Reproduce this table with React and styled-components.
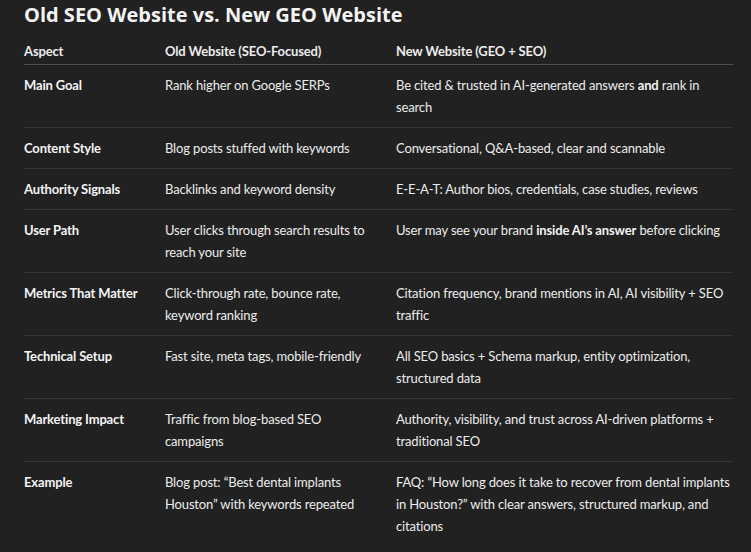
import React from "react";
import styled, { createGlobalStyle } from "styled-components";

const GlobalStyle = createGlobalStyle`
  html, body {
    margin: 0;
    padding: 0;
    background: #212121;
  }
  body {
    font-family: Lato, "Open Sans", sans-serif;
    color: #ececec;
    -webkit-font-smoothing: antialiased;
  }
`;

const rows = [
  {
    aspect: "Main Goal",
    old: "Rank higher on Google SERPs",
    next: (
      <>
        Be cited &amp; trusted in AI-generated answers <strong>and</strong> rank in search
      </>
    ),
  },
  {
    aspect: "Content Style",
    old: "Blog posts stuffed with keywords",
    next: "Conversational, Q&A-based, clear and scannable",
  },
  {
    aspect: "Authority Signals",
    old: "Backlinks and keyword density",
    next: "E-E-A-T: Author bios, credentials, case studies, reviews",
  },
  {
    aspect: "User Path",
    old: "User clicks through search results to reach your site",
    next: (
      <>
        User may see your brand <strong>inside AI’s answer</strong> before clicking
      </>
    ),
  },
  {
    aspect: "Metrics That Matter",
    old: "Click-through rate, bounce rate, keyword ranking",
    next: "Citation frequency, brand mentions in AI, AI visibility + SEO traffic",
  },
  {
    aspect: "Technical Setup",
    old: "Fast site, meta tags, mobile-friendly",
    next: "All SEO basics + Schema markup, entity optimization, structured data",
  },
  {
    aspect: "Marketing Impact",
    old: "Traffic from blog-based SEO campaigns",
    next: "Authority, visibility, and trust across AI-driven platforms + traditional SEO",
  },
  {
    aspect: "Example",
    old: "Blog post: “Best dental implants Houston” with keywords repeated",
    next: "FAQ: “How long does it take to recover from dental implants in Houston?” with clear answers, structured markup, and citations",
  },
];

function App() {
  return (
    <Page>
      <GlobalStyle />
      <Title>Old SEO Website vs. New GEO Website</Title>
      <Table>
        <colgroup>
          <col style={{ width: 141 }} />
          <col style={{ width: 231 }} />
          <col />
        </colgroup>
        <thead>
          <tr>
            <Th>Aspect</Th>
            <Th>Old Website (SEO-Focused)</Th>
            <Th>New Website (GEO + SEO)</Th>
          </tr>
        </thead>
        <tbody>
          {rows.map((r, i) => (
            <Row key={r.aspect} $last={i === rows.length - 1}>
              <Td>
                <strong>{r.aspect}</strong>
              </Td>
              <Td>{r.old}</Td>
              <Td>{r.next}</Td>
            </Row>
          ))}
        </tbody>
      </Table>
    </Page>
  );
}

export default App;

const Page = styled.div`
  width: 751px;
  height: 552px;
  padding: 0 18px 0 24px;
  box-sizing: border-box;
  overflow: hidden;
`;

const Title = styled.h2`
  margin: 0;
  padding-top: 2px;
  font-family: "Open Sans", sans-serif;
  font-size: 20px;
  line-height: 26px;
  font-weight: 700;
  color: #f3f3f3;
`;

const Table = styled.table`
  width: 709px;
  margin-top: 8px;
  border-collapse: collapse;
  table-layout: fixed;
  font-size: 13px;
  letter-spacing: -0.15px;
  line-height: 22px;

  strong {
    font-weight: 700;
    color: #f3f3f3;
  }
`;

const Th = styled.th`
  text-align: left;
  font-weight: 700;
  padding: 4px 8px 2px 0;
  border-bottom: 1px solid #4f4f4f;
  vertical-align: bottom;
`;

const Row = styled.tr`
  border-bottom: 1px solid ${(p) => (p.$last ? "transparent" : "#353535")};
`;

const Td = styled.td`
  padding: 9px 18px 9px 0;
  vertical-align: top;

  &:last-child {
    padding-right: 0;
  }
`;
